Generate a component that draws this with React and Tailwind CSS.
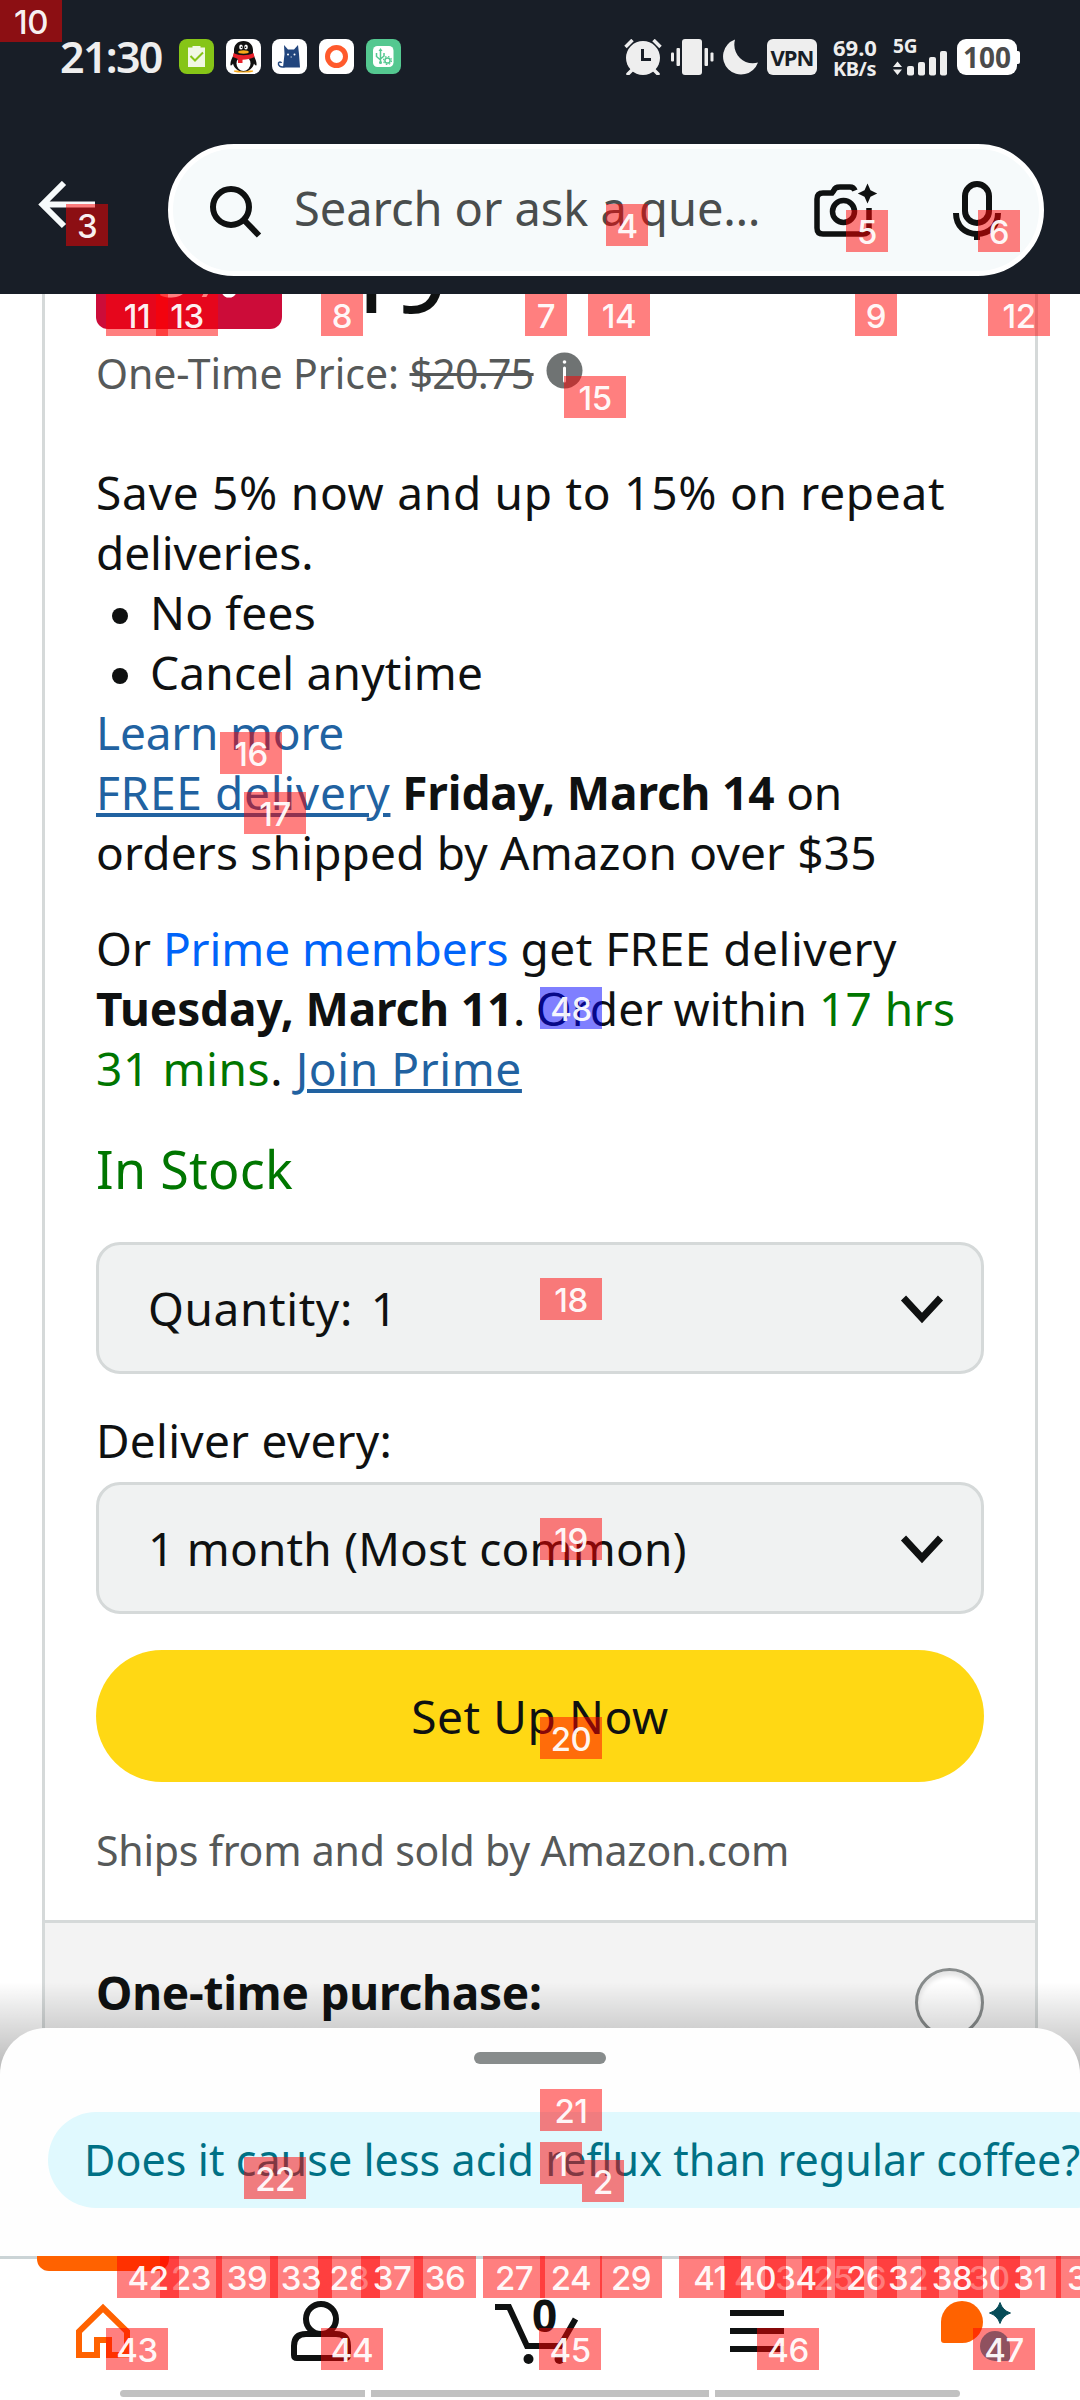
const BADGES = [
  ["1", 540, 2142], ["2", 582, 2160], ["3", 66, 204], ["4", 606, 204], ["5", 846, 210], ["6", 978, 210],
  ["7", 525, 294], ["8", 321, 294], ["9", 855, 294], ["10", 0, 0], ["11", 106, 294], ["12", 988, 294],
  ["13", 156, 294], ["14", 588, 294], ["15", 564, 376], ["16", 220, 732], ["17", 244, 792], ["18", 540, 1278],
  ["19", 540, 1518], ["20", 540, 1717], ["21", 540, 2089], ["22", 244, 2157], ["23", 160, 2256], ["24", 540, 2256],
  ["25", 802, 2256], ["26", 835, 2256], ["27", 483, 2256], ["28", 318, 2256], ["29", 600, 2256], ["30", 958, 2256],
  ["31", 999, 2256], ["32", 877, 2256], ["33", 270, 2256], ["34", 765, 2256], ["35", 1056, 2256], ["36", 414, 2256],
  ["37", 361, 2256], ["38", 921, 2256], ["39", 216, 2256], ["40", 724, 2256], ["41", 679, 2256], ["42", 117, 2256],
  ["43", 106, 2328], ["44", 321, 2328], ["45", 539, 2328], ["46", 757, 2328], ["47", 973, 2328], ["48", 540, 987],
];

function Badge({ label, x, y }) {
  const width = label.length === 1 ? "w-[42px]" : "w-[62px]";
  const tint = label === "48" ? "bg-[#0000ff]/50" : "bg-[#ff0000]/50";
  return (
    <span
      className={`absolute flex h-[42px] items-center justify-center overflow-hidden pt-[2px] font-['Inter'] text-[33px] font-medium leading-none tracking-[-0.5px] text-white/95 ${width} ${tint}`}
      style={{ left: x, top: y }}
    >
      {label}
    </span>
  );
}

function AppTiles() {
  return (
    <div className="ml-[17px] mt-[39px] flex">
      <svg className="h-[35px] w-[35px]" viewBox="0 0 35 35">
        <rect width="35" height="35" rx="8" fill="#86c517" />
        <path d="M9 8.500h4.500V7h8v1.500H26V28H9z" fill="#f1f8e4" />
        <path d="M11.500 17l4.500 4.500 8-8" fill="none" stroke="#86c517" strokeWidth="2" />
      </svg>
      <svg className="ml-[12px] h-[35px] w-[35px]" viewBox="0 0 35 35">
        <rect width="35" height="35" rx="8" fill="#fff" />
        <path d="M8 31.500h19c1 2-4 2-9.500 2s-10.500 0-9.500-2z" fill="#f9a91a" />
        <path d="M17.500 2c-6 0-9.500 4-9.500 9v4c-2 4-4 8-3.500 11 .5 1.500 2-.5 2.500-1.500C8 29 12 32.500 17.500 32.500S27 29 28 24.500c.5 1 2 3 2.500 1.500.5-3-1.500-7-3.500-11v-4c0-5-3.500-9-9.500-9z" fill="#111" />
        <ellipse cx="17.500" cy="24.500" rx="7" ry="7.500" fill="#fff" />
        <path d="M7.500 14c6 3 14 3 20 0l1 4c-4 2-8 2.700-12 2.700V24H12v-4l-5-2z" fill="#e8202a" />
        <ellipse cx="15" cy="8" rx="1.800" ry="2.600" fill="#fff" />
        <ellipse cx="20" cy="8" rx="1.800" ry="2.600" fill="#fff" />
        <circle cx="15.500" cy="8.300" r=".8" />
        <circle cx="19.500" cy="8.300" r=".8" />
        <ellipse cx="17.500" cy="13" rx="5.300" ry="1.700" fill="#f9a91a" />
      </svg>
      <svg className="ml-[11px] h-[35px] w-[35px]" viewBox="0 0 35 35">
        <rect width="35" height="35" rx="8" fill="#fff" />
        <path d="M12 6l4 4.500h6L26 6l1 9 1 13.500H11L12.500 15z" fill="#21457d" />
        <path d="M13 27.500C8 29 6 26 6.500 24c.5-1.500 2.500-1.500 3 0" fill="none" stroke="#21457d" strokeWidth="1.500" />
        <circle cx="16" cy="15.500" r="1" fill="#fff" />
        <circle cx="22.500" cy="15.500" r="1" fill="#fff" />
        <path d="M18.500 18h1.500" stroke="#fff" strokeWidth=".7" />
      </svg>
      <svg className="ml-[12px] h-[35px] w-[35px]" viewBox="0 0 35 35">
        <rect width="35" height="35" rx="8" fill="#fff" />
        <circle cx="17.500" cy="17.500" r="9" fill="none" stroke="#ff5a2c" strokeWidth="5" />
      </svg>
      <svg className="ml-[12px] h-[35px] w-[35px]" viewBox="0 0 35 35">
        <rect width="35" height="35" rx="8" fill="#54c890" />
        <rect x="7" y="7" width="20.500" height="21" rx="4.500" fill="#fff" />
        <path d="M14.500 24.500V11M10.500 14v3.500l4 3.500M18 14v3l-3.500 3" fill="none" stroke="#54c890" strokeWidth="1.500" />
        <path d="M12.500 12l2-3 2 3z" fill="#54c890" />
        <circle cx="14.500" cy="23.500" r="1.500" fill="#54c890" />
        <circle cx="21.500" cy="21.500" r="2.600" fill="none" stroke="#54c890" strokeWidth="1.500" />
        <circle cx="21.500" cy="21.500" r="4" fill="none" stroke="#54c890" strokeWidth="1.200" strokeDasharray="1.600 1.540" />
      </svg>
    </div>
  );
}

function StatusBar() {
  return (
    <div className="flex h-[114px] items-start text-[#eeeeee]">
      <div className="ml-[60px] mt-[28px] w-[102px] whitespace-nowrap text-[43px] font-semibold leading-[58px] tracking-[-1.7px]">21:30</div>
      <AppTiles />
      <svg className="ml-[223px] mt-[39px] h-[36px] w-[134px]" viewBox="0 0 134 36" fill="#eee">
        <path d="M1.500 8l7-7M36.500 8l-7-7" stroke="#eee" strokeWidth="3.500" fill="none" />
        <path d="M4 35l5-5M34 35l-5-5" stroke="#eee" strokeWidth="3.500" strokeLinecap="round" fill="none" />
        <circle cx="19" cy="19" r="17" />
        <path d="M18.500 10v10.500H27" stroke="#181e27" strokeWidth="3" fill="none" />
        <rect x="58" y="0" width="20" height="36" rx="3" />
        <rect x="52.500" y="9" width="3.500" height="18" rx="1" />
        <rect x="47" y="13.500" width="3" height="9" rx="1" />
        <rect x="80.500" y="9" width="3.500" height="18" rx="1" />
        <rect x="86.500" y="13.500" width="3" height="9" rx="1" />
        <path d="M111 0.500a18 18 0 1 0 23 23c-13 4-27-8-23-23z" />
      </svg>
      <div className="ml-[9px] mt-[39px] flex h-[36px] w-[50px] items-center justify-center rounded-[6px] bg-[#eeeeee] text-[22px] font-bold leading-none tracking-[-1px] text-[#181e27]">VPN</div>
      <div className="ml-[16px] mt-[36px] flex w-[44px] flex-col whitespace-nowrap text-[22px] font-bold leading-[22px]">
        <span>69.0</span>
        <span className="text-[20px] leading-[22px] tracking-[-0.5px]">KB/s</span>
      </div>
      <div className="ml-[16px] mt-[37px] flex w-[55px] flex-col text-[19px] font-bold leading-[18px]">
        <span>5G</span>
        <svg className="-mt-[4px] h-[26px] w-[55px]" viewBox="0 0 55 26" fill="#eee">
          <path d="M0 16l4.500-5.500L9 16zM0 18.500l4.500 5.500L9 18.500z" />
          <rect x="14" y="15" width="7" height="9.500" rx="2" />
          <rect x="25" y="11" width="7" height="13.500" rx="2" />
          <rect x="36" y="6" width="7" height="18.500" rx="2" />
          <rect x="47" y="0" width="7" height="24.500" rx="2" />
        </svg>
      </div>
      <div className="ml-[9px] mt-[39px] flex items-center">
        <div className="flex h-[36px] w-[60px] items-center justify-center rounded-[9px] bg-white text-[28px] font-bold leading-none text-[#4b4b4b]">100</div>
        <div className="h-[13px] w-[3px] rounded-r-[2px] bg-white" />
      </div>
    </div>
  );
}

function SearchHeader() {
  return (
    <div className="flex px-[36px] pt-[30px]">
      <svg className="mt-[37px] h-[48px] w-[60px]" viewBox="0 0 60 48" fill="none" stroke="#f6fafb" strokeWidth="6">
        <path d="M28 2L6.500 23.500 28 45M6.500 23.500h52.500" />
      </svg>
      <div className="ml-[72px] flex h-[132px] w-[876px] rounded-full border-[5px] border-white bg-[#f6fafb]">
        <svg className="ml-[36px] mt-[36px] h-[54px] w-[54px]" viewBox="0 0 54 54" fill="none" stroke="#0f1111" strokeWidth="6">
          <circle cx="22" cy="22" r="18" />
          <path d="M34.500 34.500L50 50.500" />
        </svg>
        <div className="ml-[31px] mt-[27px] w-[500px] whitespace-nowrap text-[47px] leading-[64px] tracking-[-0.05px] text-[#494d4d]">Search or ask a que…</div>
        <svg className="ml-[19px] mt-[32px] h-[60px] w-[66px]" viewBox="0 0 66 60" fill="none" stroke="#0f1111" strokeWidth="5.500">
          <path d="M42 9.500C41 7 40 6 37 6H27c-4 0-5 1-6.500 4L19 12H10c-4 0-6 2-6 6v29c0 4 2 6 6 6h40c4 0 6-2 6-5V27" />
          <circle cx="30.500" cy="30.500" r="11" />
          <path d="M54.500 2.500l3 6.700 6.700 3.300-6.700 3.200-3 6.800-3-6.800-6.700-3.200 6.700-3.300z" fill="#0f1111" stroke="none" />
        </svg>
        <svg className="ml-[71px] mt-[30px] h-[64px] w-[54px]" viewBox="0 0 54 64" fill="none" stroke="#0f1111" strokeWidth="6">
          <rect x="15" y="5" width="24" height="39" rx="12" />
          <path d="M6 34c0 13 9 21 21 21s21-8 21-21M27 55v6" />
        </svg>
      </div>
    </div>
  );
}

function Select({ children }) {
  return (
    <div className="flex h-[132px] items-center justify-between rounded-[24px] border-[3px] border-[#d5d9d9] bg-[#f0f2f2] pl-[49px] pr-[36px]">
      <div className="flex whitespace-pre leading-[60px]">{children}</div>
      <svg className="mt-[2px] h-[30px] w-[46px]" viewBox="0 0 46 30" fill="none" stroke="#0f1111" strokeWidth="7">
        <path d="M4.500 4L23 24 41.500 4" />
      </svg>
    </div>
  );
}

function Line({ className = "", children }) {
  return <div className={`h-[60px] whitespace-nowrap ${className}`}>{children}</div>;
}

function OfferCard() {
  return (
    <div className="mx-[42px] h-[1734px] overflow-hidden border-x-[3px] border-[#d5d9d9] text-[46px] leading-[60px] text-[#0f1111]">
      <div className="px-[51px]">
        <div className="flex h-[49px] items-start">
          <div className="flex h-[35px] w-[186px] justify-center overflow-hidden rounded-b-[12px] bg-[#cc0c39]">
            <div className="-mt-[65px] h-[90px] text-[60px] leading-[90px] text-white">-5%</div>
          </div>
          <div className="ml-[60px] h-[48px] overflow-hidden">
            <div className="-mt-[76px] text-[92px] font-medium leading-[120px]">19</div>
          </div>
        </div>
        <div className="flex h-[60px] whitespace-pre text-[41px] text-[#565959]">
          <span className="tracking-[-0.05px]">One-Time Price: </span>
          <span className="tracking-[-0.7px] line-through decoration-[3px]">$20.75</span>
          <svg className="ml-[12px] mt-[9px] h-[37px] w-[37px]" viewBox="0 0 37 37">
            <circle cx="18.500" cy="18.500" r="18" fill="#6f7373" />
            <circle cx="18.500" cy="10" r="1.800" fill="#fff" />
            <path d="M18.500 16v13" stroke="#fff" strokeWidth="3" strokeLinecap="round" />
          </svg>
        </div>
        <div className="mt-[59px]">
          <Line className="tracking-[0.74px]">Save 5% now and up to 15% on repeat</Line>
          <Line className="tracking-[-0.1px]">deliveries.</Line>
          <ul>
            {["No fees", "Cancel anytime"].map((item) => (
              <li key={item} className="flex h-[60px] items-center tracking-[0.2px]">
                <span className="ml-[16px] mr-[22px] mt-[7px] h-[16px] w-[16px] rounded-full bg-[#0f1111]" />
                {item}
              </li>
            ))}
          </ul>
          <Line className="tracking-[-0.2px] text-[#2162a1]">Learn more</Line>
          <Line className="tracking-[-0.15px]">
            <span className="text-[#2162a1] underline decoration-[4px] underline-offset-[3px] tracking-[0.7px]">FREE delivery</span>{" "}
            <b>Friday, March 14</b> <span>on</span>
          </Line>
          <Line className="tracking-[0.17px]">orders shipped by Amazon over $35</Line>
        </div>
        <div className="mt-[36px]">
          <Line>
            Or <span className="tracking-[-0.1px] text-[#0064f9]">Prime members</span> <span className="tracking-[0.5px]">get FREE delivery</span>
          </Line>
          <Line>
            <b className="tracking-[-0.15px]">Tuesday, March 11</b>
            <span className="[word-spacing:-1.5px]">. Order within</span>{" "}
            <span className="tracking-[0.4px] text-[#007600]">17 hrs</span>
          </Line>
          <Line className="tracking-[0.6px]">
            <span className="text-[#007600]">31 mins</span>.{" "}
            <span className="text-[#2162a1] underline decoration-[4px] underline-offset-[3px]">Join Prime</span>
          </Line>
        </div>
        <Line className="mt-[41px] text-[52px] tracking-[0.3px] text-[#007600]">In Stock</Line>
        <div className="mt-[43px]">
          <Select>
            <span className="tracking-[0.6px]">Quantity:</span>
            <span className="ml-[18px]">1</span>
          </Select>
        </div>
        <Line className="mt-[36px] tracking-[0.25px]">Deliver every:</Line>
        <div className="mt-[12px]">
          <Select>
            <span className="tracking-[0.2px]">1 month (Most common)</span>
          </Select>
        </div>
        <button className="mt-[36px] flex h-[132px] w-full items-center justify-center rounded-full bg-[#ffd814] leading-[60px] tracking-[0.6px]">
          Set Up Now
        </button>
        <Line className="mt-[38px] text-[41px] tracking-[-0.2px] text-[#565959]">Ships from and sold by Amazon.com</Line>
      </div>
      <div className="mt-[40px] flex h-[300px] items-start justify-between border-t-[3px] border-[#d5d9d9] bg-[#f3f3f3] px-[51px]">
        <Line className="mt-[39px] font-bold tracking-[-0.22px]">One-time purchase:</Line>
        <div className="mt-[45px] h-[69px] w-[69px] rounded-full border-[3px] border-[#888c8c] bg-white shadow-[inset_0_5px_4px_rgba(0,0,0,0.1)]" />
      </div>
    </div>
  );
}

function QuestionSheet() {
  return (
    <div className="relative h-[228px] shrink-0">
      <div className="absolute -top-[46px] h-[96px] w-full bg-linear-to-b from-black/0 to-black/30" />
      <div className="relative flex h-full flex-col overflow-hidden rounded-t-[46px] bg-[#fefefe]">
        <div className="mx-auto mt-[24px] h-[12px] w-[132px] shrink-0 rounded-full bg-[#888c8c]" />
        <div className="ml-[48px] mt-[48px] flex h-[96px] w-[1075px] shrink-0 items-center whitespace-nowrap rounded-full bg-[#e0f9fe] pl-[36px] text-[43px] leading-[60px] tracking-[0.06px] text-[#007185]">
          Does it cause less acid reflux than regular coffee?
        </div>
      </div>
    </div>
  );
}

function BottomNav() {
  return (
    <nav className="flex h-[144px] shrink-0 flex-col border-t-[3px] border-[#cbd4d6] bg-white">
      <div className="-mt-[3px] ml-[37px] h-[15px] w-[132px] shrink-0 rounded-b-[12px] bg-[#ff6200]" />
      <div className="mt-[24px] flex h-[72px] shrink-0 items-start">
        <svg className="ml-[73px] h-[66px] w-[60px]" viewBox="73 2295 60 66" fill="none" stroke="#ff6200" strokeWidth="6">
          <path d="M97 2355H79V2331.500L103 2308l24 23.500V2355h-18v-15H97z" />
        </svg>
        <svg className="ml-[155px] h-[69px] w-[66px]" viewBox="288 2295 66 69" fill="none" stroke="#0f1111" strokeWidth="6">
          <circle cx="321" cy="2319" r="15" />
          <path d="M294 2346c0-8 4-12 12-12h30c8 0 12 4 12 12v9q0 3-3 3h-48q-3 0-3-3z" />
        </svg>
        <div className="relative ml-[136px] h-[72px] w-[90px]">
          <svg className="h-[72px] w-[90px]" viewBox="490 2295 90 72">
            <path d="M495 2307h14l18 39h33l15.500-27" fill="none" stroke="#0f1111" strokeWidth="6" />
            <circle cx="528.500" cy="2359" r="5" fill="#0f1111" />
            <circle cx="559.500" cy="2359" r="5" fill="#0f1111" />
          </svg>
          <span className="absolute left-[42px] top-0 text-[44px] font-bold leading-[40px] text-[#0f1111]">0</span>
        </div>
        <div className="ml-[150px] mt-[15px] flex w-[54px] flex-col gap-[12px]">
          <div className="h-[6px] bg-[#0f1111]" />
          <div className="h-[6px] bg-[#0f1111]" />
          <div className="h-[6px] bg-[#0f1111]" />
        </div>
        <svg className="ml-[154px] h-[72px] w-[80px]" viewBox="938 2295 80 72">
          <path d="M941 2322a21 21 0 1 1 21 21h-18q-3 0-3-3z" fill="#ff6200" />
          <path d="M1000 2302.500q2.500 8 10.500 10.500-8 2.500-10.500 10.500-2.500-8-10.500-10.500 8-2.500 10.500-10.500z" fill="#064c58" stroke="#064c58" strokeWidth="1" />
          <path d="M1010 2346a15 15 0 1 0-15 15h12q3 0 3-3z" fill="#1fa3be" />
        </svg>
      </div>
      <div className="mt-[23px] flex gap-[6px] pl-[120px]">
        <div className="h-[7px] w-[245px] rounded-l-full bg-[#c1c1c1]" />
        <div className="h-[7px] w-[338px] bg-[#c1c1c1]" />
        <div className="h-[7px] w-[245px] rounded-r-full bg-[#c1c1c1]" />
      </div>
    </nav>
  );
}

export default function App() {
  return (
    <div className="relative flex h-[2400px] w-[1080px] flex-col overflow-hidden bg-white font-['Noto_Sans',sans-serif]">
      <header className="h-[294px] shrink-0 bg-[#181e27]">
        <StatusBar />
        <SearchHeader />
      </header>
      <OfferCard />
      <QuestionSheet />
      <BottomNav />
      {BADGES.map(([label, x, y]) => (
        <Badge key={label} label={label} x={x} y={y} />
      ))}
    </div>
  );
}
